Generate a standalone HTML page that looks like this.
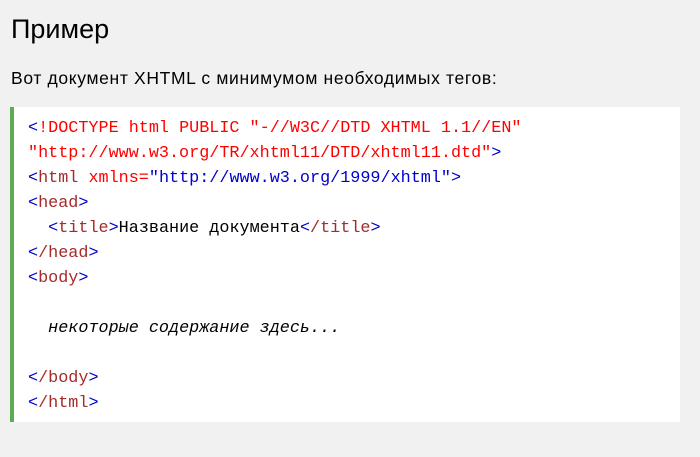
<!DOCTYPE html>
<html><head><meta charset="utf-8"><style>
body{margin:0;background:#f1f1f1;width:700px;height:457px;overflow:hidden;font-family:"Liberation Sans",sans-serif;color:#000}
h2{position:absolute;left:11px;top:11px;margin:0;font-weight:normal;font-size:27px;line-height:36px}
p{position:absolute;left:11px;top:66px;margin:0;font-size:17.5px;line-height:24px;letter-spacing:0.65px}
.box{position:absolute;left:10px;top:107px;width:666px;height:315px;background:#fff;border-left:4px solid #5cac55}
pre{margin:0;position:absolute;left:14px;top:9px;font-family:"Liberation Mono",monospace;font-size:16.8px;line-height:25px;color:#000}
.b{color:#0000cd}.t{color:#a52a2a}.r{color:#ff0000}
</style></head><body>
<h2>Пример</h2>
<p>Вот документ XHTML с минимумом необходимых тегов:</p>
<div class="box"><pre><span class="b">&lt;</span><span class="r">!DOCTYPE html PUBLIC "-//W3C//DTD XHTML 1.1//EN"
"http://www.w3.org/TR/xhtml11/DTD/xhtml11.dtd"</span><span class="b">&gt;</span>
<span class="b">&lt;</span><span class="t">html</span><span class="r"> xmlns=</span><span class="b">"http://www.w3.org/1999/xhtml"&gt;</span>
<span class="b">&lt;</span><span class="t">head</span><span class="b">&gt;</span>
  <span class="b">&lt;</span><span class="t">title</span><span class="b">&gt;</span>Название документа<span class="b">&lt;</span><span class="t">/title</span><span class="b">&gt;</span>
<span class="b">&lt;</span><span class="t">/head</span><span class="b">&gt;</span>
<span class="b">&lt;</span><span class="t">body</span><span class="b">&gt;</span>

  <i>некоторые содержание здесь...</i>

<span class="b">&lt;</span><span class="t">/body</span><span class="b">&gt;</span>
<span class="b">&lt;</span><span class="t">/html</span><span class="b">&gt;</span></pre></div>
</body></html>
